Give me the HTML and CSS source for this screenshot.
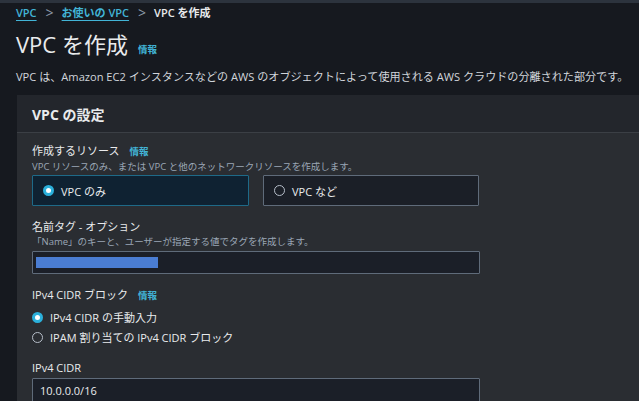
FILE: index.html
```html
<!DOCTYPE html>
<html lang="ja">
<head>
    <meta charset="UTF-8">
    <meta name="viewport" content="width=device-width, initial-scale=1.0">
    <title>VPC を作成</title>
    <link rel="stylesheet" href="styles.css">
</head>
<body>
    <div class="topbar"></div>
    <div class="page">
        <nav class="breadcrumb">
            <a href="#">VPC</a>
            <span class="sep">&gt;</span>
            <a href="#">お使いの VPC</a>
            <span class="sep">&gt;</span>
            <span class="current">VPC を作成</span>
        </nav>

        <div class="title-row">
            <h1>VPC を作成</h1>
            <a href="#" class="info">情報</a>
        </div>
        <p class="desc">VPC は、Amazon EC2 インスタンスなどの AWS のオブジェクトによって使用される AWS クラウドの分離された部分です。</p>

        <div class="card">
            <div class="card-header">VPC の設定</div>
            <div class="card-body">
                <div class="field">
                    <div class="label">作成するリソース <a href="#" class="info">情報</a></div>
                    <div class="hint">VPC リソースのみ、または VPC と他のネットワークリソースを作成します。</div>
                    <div class="tiles">
                        <div class="tile selected"><span class="radio on"></span>VPC のみ</div>
                        <div class="tile"><span class="radio"></span>VPC など</div>
                    </div>
                </div>

                <div class="field">
                    <div class="label">名前タグ - オプション</div>
                    <div class="hint">「Name」のキーと、ユーザーが指定する値でタグを作成します。</div>
                    <div class="input"><span class="selection"></span></div>
                </div>

                <div class="field">
                    <div class="label">IPv4 CIDR ブロック <a href="#" class="info">情報</a></div>
                    <div class="radios">
                        <div class="radio-row"><span class="radio on"></span>IPv4 CIDR の手動入力</div>
                        <div class="radio-row"><span class="radio"></span>IPAM 割り当ての IPv4 CIDR ブロック</div>
                    </div>
                </div>

                <div class="field">
                    <div class="label">IPv4 CIDR</div>
                    <div class="input value">10.0.0.0/16</div>
                </div>
            </div>
        </div>
    </div>
</body>
</html>
```

FILE: styles.css
```css
body {
    margin: 0;
    background: #16191f;
    color: #e9ebed;
    font-family: 'Open Sans', 'Noto Sans CJK JP', sans-serif;
    overflow: hidden;
    height: 401px;
}
.topbar {
    height: 3px;
    background: #2c333d;
}
.page {
    padding: 0 0 0 16px;
}
.breadcrumb {
    display: flex;
    align-items: center;
    height: 18px;
    font-size: 11px;
    font-weight: 600;
}
.breadcrumb a {
    color: #42b4d6;
    text-decoration: underline;
    text-underline-offset: 3px;
}
.breadcrumb .sep {
    color: #8d99a8;
    font-weight: 400;
    font-size: 14px;
    margin: 0 8px 0 9px;
}
.breadcrumb .current {
    color: #e9ebed;
}
.title-row {
    display: flex;
    align-items: baseline;
    margin-top: 9px;
}
h1 {
    margin: 0;
    font-size: 22px;
    font-weight: 400;
    line-height: 28px;
}
.info {
    color: #42b4d6;
    font-size: 9.5px;
    font-weight: 700;
    text-decoration: none;
    margin-left: 10px;
}
.desc {
    margin: 11px 0 0;
    font-size: 11.1px;
    line-height: 16px;
    white-space: nowrap;
    color: #d1d5db;
}
.card {
    margin-top: 10px;
    margin-left: 1px;
    background: #2a2d32;
}
.card-header {
    background: #23262c;
    height: 37px;
    padding-left: 15px;
    display: flex;
    align-items: center;
    font-size: 14px;
    font-weight: 700;
    border-bottom: 1px solid #3b3f45;
}
.card-body {
    padding: 10px 0 0 15px;
}
.field {
    margin-bottom: 13px;
}
.label {
    font-size: 11px;
    line-height: 16px;
    color: #e9ebed;
    display: flex;
    align-items: baseline;
}
.label .info {
    margin-left: 10px;
}
.hint {
    font-size: 9.5px;
    line-height: 13px;
    color: #9ba7b6;
    margin-bottom: 2px;
}
.tiles {
    display: flex;
    gap: 14px;
}
.tile {
    box-sizing: border-box;
    width: 217px;
    height: 31px;
    border: 1px solid #5f6b7a;
    background: #1b1f27;
    display: flex;
    align-items: center;
    font-size: 11px;
    padding-left: 10px;
    border-radius: 1px;
}
.tile.selected {
    border-color: #1e6a88;
    background: #0f2232;
}
.tile + .tile {
    width: 216px;
}
.radio {
    box-sizing: border-box;
    width: 11px;
    height: 11px;
    border: 1.4px solid #b6bec9;
    border-radius: 50%;
    margin-right: 7px;
    flex-shrink: 0;
}
.radio.on {
    border: 3.2px solid #2bb0db;
    background: #ffffff;
}
.input {
    box-sizing: border-box;
    width: 448px;
    height: 23px;
    border: 1px solid #5f6b7a;
    background: #1b1f28;
    display: flex;
    align-items: center;
    margin-top: 3px;
    border-radius: 1px;
}
.selection {
    width: 122px;
    height: 11px;
    margin-left: 3px;
    background: #4a7dd3;
}
.input.value {
    padding-left: 7px;
    font-size: 11px;
    height: 24px;
    margin-top: 2px;
}
.radios {
    margin-top: 3px;
}
.radio-row {
    display: flex;
    align-items: center;
    font-size: 11px;
    height: 20px;
}
```
